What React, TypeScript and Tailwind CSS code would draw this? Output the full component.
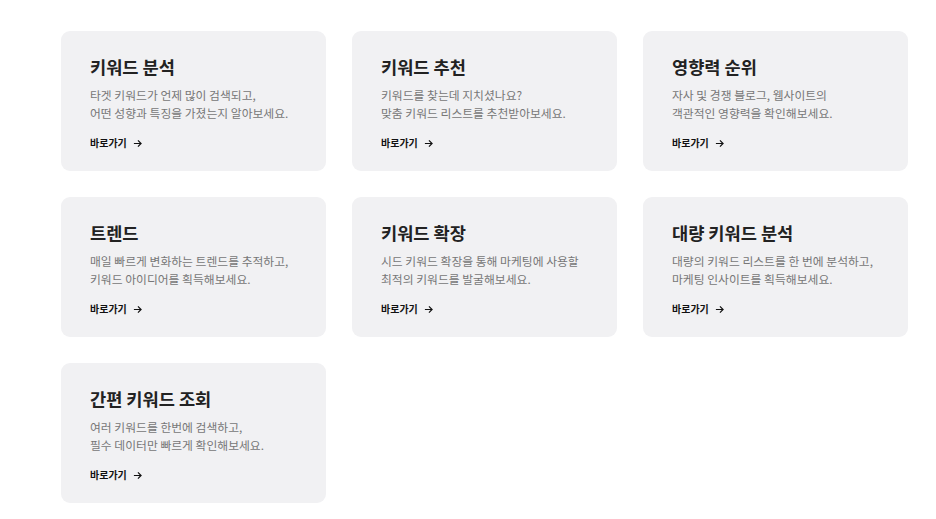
const cards = [
  {
    title: '키워드 분석',
    desc: ['타겟 키워드가 언제 많이 검색되고,', '어떤 성향과 특징을 가졌는지 알아보세요.'],
  },
  {
    title: '키워드 추천',
    desc: ['키워드를 찾는데 지치셨나요?', '맞춤 키워드 리스트를 추천받아보세요.'],
  },
  {
    title: '영향력 순위',
    desc: ['자사 및 경쟁 블로그, 웹사이트의', '객관적인 영향력을 확인해보세요.'],
  },
  {
    title: '트렌드',
    desc: ['매일 빠르게 변화하는 트렌드를 추적하고,', '키워드 아이디어를 획득해보세요.'],
  },
  {
    title: '키워드 확장',
    desc: ['시드 키워드 확장을 통해 마케팅에 사용할', '최적의 키워드를 발굴해보세요.'],
  },
  {
    title: '대량 키워드 분석',
    desc: ['대량의 키워드 리스트를 한 번에 분석하고,', '마케팅 인사이트를 획득해보세요.'],
  },
  {
    title: '간편 키워드 조회',
    desc: ['여러 키워드를 한번에 검색하고,', '필수 데이터만 빠르게 확인해보세요.'],
  },
]

function Arrow() {
  return (
    <svg width="9" height="9" viewBox="0 0 10 10" fill="none" stroke="#111" strokeWidth="1.3">
      <path d="M1 5h8M5.5 1.5 9 5 5.5 8.5" />
    </svg>
  )
}

function Card({ title, desc }: { title: string; desc: string[] }) {
  return (
    <div className="h-[140px] rounded-[9px] bg-[#f1f1f3] px-[29px] pt-[24px]">
      <h3 className="text-[17.6px] font-bold leading-[24px] text-[#222]">{title}</h3>
      <p className="mt-[7px] text-[11.8px] leading-[18px] text-[#777]">
        {desc[0]}
        <br />
        {desc[1]}
      </p>
      <a href="#" className="mt-[14px] flex items-center gap-[6px] text-[10px] font-bold leading-[14px] text-[#111]">
        바로가기
        <Arrow />
      </a>
    </div>
  )
}

export default function App() {
  return (
    <div
      className="min-h-[519px] bg-white pl-[61px] pt-[31px]"
      style={{ fontFamily: '"Noto Sans CJK KR", "Noto Sans", sans-serif' }}
    >
      <div className="grid w-[847px] grid-cols-3 gap-[26px]">
        {cards.map((c) => (
          <Card key={c.title} title={c.title} desc={c.desc} />
        ))}
      </div>
    </div>
  )
}
